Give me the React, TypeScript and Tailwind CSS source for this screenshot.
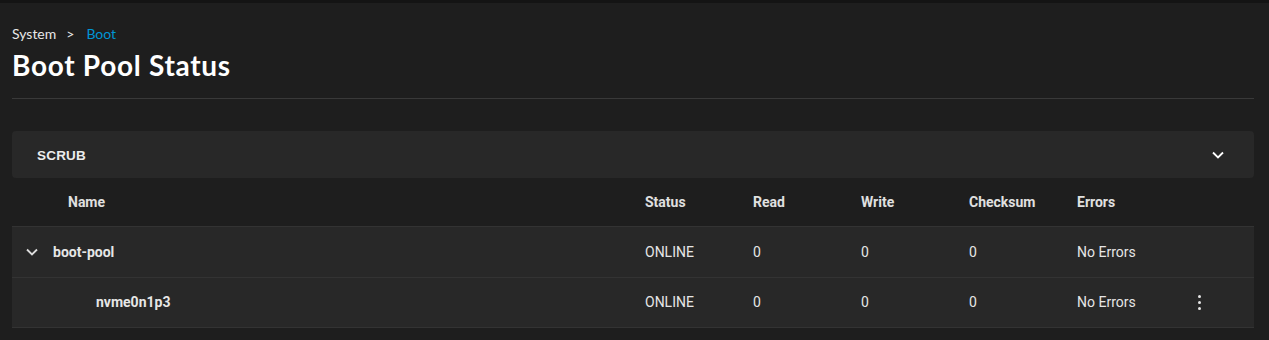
import React from 'react';

interface DiskRow {
  name: string;
  status: string;
  read: number;
  write: number;
  checksum: number;
  errors: string;
  level: number;
}

const rows: DiskRow[] = [
  { name: 'boot-pool', status: 'ONLINE', read: 0, write: 0, checksum: 0, errors: 'No Errors', level: 0 },
  { name: 'nvme0n1p3', status: 'ONLINE', read: 0, write: 0, checksum: 0, errors: 'No Errors', level: 1 },
];

const ChevronDown: React.FC<{ className?: string }> = ({ className }) => (
  <svg viewBox="0 0 24 24" className={className} fill="none" stroke="currentColor" strokeWidth={2.2}>
    <path d="M6 9l6 6 6-6" />
  </svg>
);

const cols = 'grid grid-cols-[633px_108px_108px_108px_108px_108px_1fr] items-center';

const App: React.FC = () => {
  return (
    <div className="min-h-[340px] bg-[#1e1e1e] border-t-[3px] border-[#141414] text-white font-['Roboto',sans-serif]">
      <div className="pl-3 pr-[15px]">
        {/* Page header */}
        <div className="pt-[20px] flex items-center gap-[10px] text-[14px] font-['Lato',sans-serif]">
          <span className="text-[#e8e8e8]">System</span>
          <span className="text-[#e8e8e8]">&gt;</span>
          <span className="text-[#0095d5] ml-[2px]">Boot</span>
        </div>
        <h1 className="mt-[4px] text-[28px] leading-[34px] font-bold tracking-[0.7px] font-['Lato',sans-serif] text-white">
          Boot Pool Status
        </h1>
        <div className="mt-[16px] h-px bg-[#393939]" />

        {/* Scrub panel */}
        <div className="mt-[32px] h-[47px] rounded-[4px] bg-[#282828] flex items-center justify-between pl-[25px] pr-[26px]">
          <span className="mt-[3px] text-[13.5px] font-bold tracking-[0.2px] text-[#ececec] font-['Liberation_Sans',sans-serif]">SCRUB</span>
          <ChevronDown className="mt-[1px] w-[20px] h-[20px] text-white" />
        </div>

        {/* Table */}
        <div>
          <div className={`${cols} h-[48px] text-[14px] font-bold text-[#e0e0e0]`}>
            <span className="pl-[56px]">Name</span>
            <span>Status</span>
            <span>Read</span>
            <span>Write</span>
            <span>Checksum</span>
            <span>Errors</span>
            <span />
          </div>
          {rows.map((row) => (
            <div
              key={row.name}
              className={`${cols} h-[51px] bg-[#282828] border-t border-[#333333] last:border-b text-[14px] text-[#e6e6e6]`}
            >
              <div className="flex items-center">
                {row.level === 0 ? (
                  <>
                    <ChevronDown className="ml-[10px] w-[20px] h-[20px] text-[#dcdcdc]" />
                    <span className="ml-[11px] font-bold">{row.name}</span>
                  </>
                ) : (
                  <span className="ml-[84px] font-bold">{row.name}</span>
                )}
              </div>
              <span>{row.status}</span>
              <span>{row.read}</span>
              <span>{row.write}</span>
              <span>{row.checksum}</span>
              <span>{row.errors}</span>
              <div className="flex">
                {row.level === 1 && (
                  <div className="ml-[13px] flex flex-col gap-[3px]">
                    <span className="w-[3px] h-[3px] rounded-full bg-[#e6e6e6]" />
                    <span className="w-[3px] h-[3px] rounded-full bg-[#e6e6e6]" />
                    <span className="w-[3px] h-[3px] rounded-full bg-[#e6e6e6]" />
                  </div>
                )}
              </div>
            </div>
          ))}
        </div>
      </div>
    </div>
  );
};

export default App;
